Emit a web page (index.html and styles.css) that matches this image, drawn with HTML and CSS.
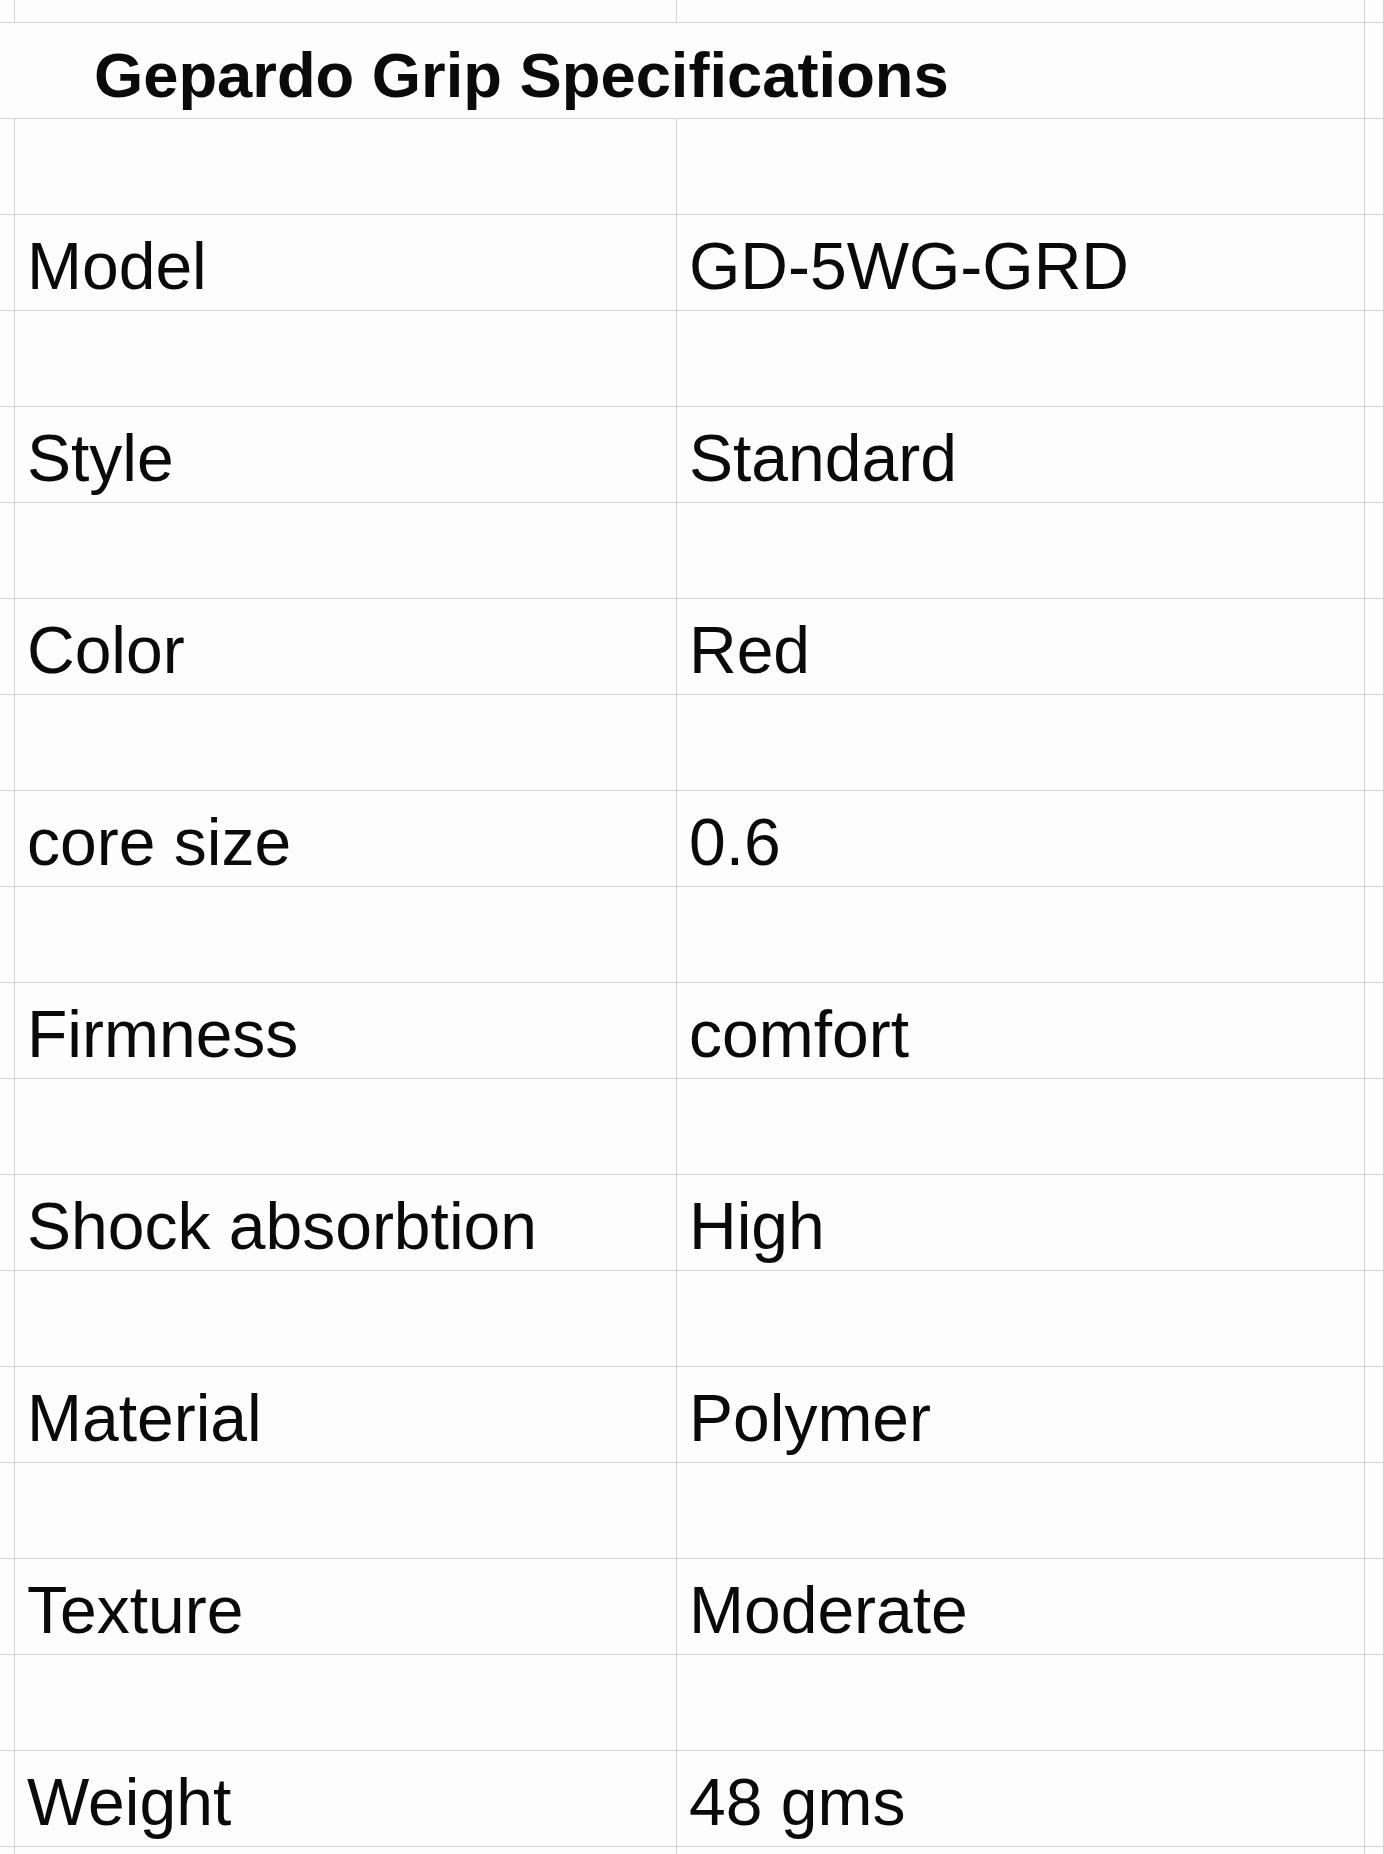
FILE: index.html
```html
<!DOCTYPE html>
<html lang="en">
<head>
<meta charset="utf-8">
<title>Gepardo Grip Specifications</title>
<link rel="stylesheet" href="styles.css">
</head>
<body>
<div class="sheet">
  <div class="cell top"></div><div class="cell top"></div><div class="cell top"></div><div class="cell top"></div>

  <div class="cell title">Gepardo Grip Specifications</div><div class="cell"></div>

  <div class="cell"></div><div class="cell"></div><div class="cell"></div><div class="cell"></div>
  <div class="cell"></div><div class="cell label">Model</div><div class="cell value">GD-5WG-GRD</div><div class="cell"></div>

  <div class="cell"></div><div class="cell"></div><div class="cell"></div><div class="cell"></div>
  <div class="cell"></div><div class="cell label">Style</div><div class="cell value">Standard</div><div class="cell"></div>

  <div class="cell"></div><div class="cell"></div><div class="cell"></div><div class="cell"></div>
  <div class="cell"></div><div class="cell label">Color</div><div class="cell value">Red</div><div class="cell"></div>

  <div class="cell"></div><div class="cell"></div><div class="cell"></div><div class="cell"></div>
  <div class="cell"></div><div class="cell label">core size</div><div class="cell value">0.6</div><div class="cell"></div>

  <div class="cell"></div><div class="cell"></div><div class="cell"></div><div class="cell"></div>
  <div class="cell"></div><div class="cell label">Firmness</div><div class="cell value">comfort</div><div class="cell"></div>

  <div class="cell"></div><div class="cell"></div><div class="cell"></div><div class="cell"></div>
  <div class="cell"></div><div class="cell label">Shock absorbtion</div><div class="cell value">High</div><div class="cell"></div>

  <div class="cell"></div><div class="cell"></div><div class="cell"></div><div class="cell"></div>
  <div class="cell"></div><div class="cell label">Material</div><div class="cell value">Polymer</div><div class="cell"></div>

  <div class="cell"></div><div class="cell"></div><div class="cell"></div><div class="cell"></div>
  <div class="cell"></div><div class="cell label">Texture</div><div class="cell value">Moderate</div><div class="cell"></div>

  <div class="cell"></div><div class="cell"></div><div class="cell"></div><div class="cell"></div>
  <div class="cell"></div><div class="cell label">Weight</div><div class="cell value">48 gms</div><div class="cell"></div>

  <div class="cell bottom"></div><div class="cell bottom"></div><div class="cell bottom"></div><div class="cell bottom"></div>
</div>
</body>
</html>
```
FILE: styles.css
```css
html, body {
  margin: 0;
  padding: 0;
  background: #fdfdfd;
}

body {
  width: 1384px;
  height: 1854px;
  overflow: hidden;
  font-family: "Liberation Sans", Arial, sans-serif;
  color: #0a0a0a;
}

.sheet {
  display: grid;
  grid-template-columns: 15px 662px 688px 1fr;
  grid-auto-rows: 96px;
  grid-template-rows: 23px;
}

.cell {
  box-sizing: border-box;
  border-right: 1px solid #d4d4d4;
  border-bottom: 1px solid #d4d4d4;
  min-width: 0;
  white-space: nowrap;
}

.title {
  grid-column: 1 / span 3;
  font-weight: 700;
  font-size: 63.3px;
  line-height: 64px;
  padding: 20px 0 0 94px;
}

.label,
.value {
  font-size: 66px;
  line-height: 66px;
  padding: 18px 0 0 12px;
}

.bottom {
  border-bottom: none;
}
```
